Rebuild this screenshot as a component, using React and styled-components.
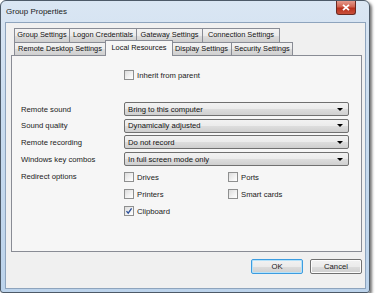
import React, { useState } from "react"
import styled, { createGlobalStyle } from "styled-components"

const GlobalStyle = createGlobalStyle`
  body {
    margin: 0;
    background: #ffffff;
    font-family: "Liberation Sans", Arial, sans-serif;
  }
`

const tabRows = [
    [
        { label: "Group Settings", width: 56 },
        { label: "Logon Credentials", width: 67 },
        { label: "Gateway Settings", width: 66 },
        { label: "Connection Settings", width: 77 }
    ],
    [
        { label: "Remote Desktop Settings", width: 92 },
        { label: "Local Resources", width: 66 },
        { label: "Display Settings", width: 60 },
        { label: "Security Settings", width: 61 }
    ]
]

const combos = [
    { label: "Remote sound", value: "Bring to this computer" },
    { label: "Sound quality", value: "Dynamically adjusted" },
    { label: "Remote recording", value: "Do not record" },
    { label: "Windows key combos", value: "In full screen mode only" }
]

function CheckBox({ checked, label, onToggle }) {
    return <CheckRow onClick={onToggle}>
        <Box>
            {checked &&
                <svg width="8" height="8" viewBox="0 0 8 8">
                    <path d="M1.5 4.2 L3.2 6.2 L6.6 1.4" fill="none" stroke="#2a4f9a" strokeWidth="1.3" />
                </svg>}
        </Box>
        <span>{label}</span>
    </CheckRow>
}

function App() {
    const [active, setActive] = useState("Local Resources")
    const [checks, setChecks] = useState({
        inherit: false,
        drives: false,
        ports: false,
        printers: false,
        smart: false,
        clipboard: true
    })

    // flip a checkbox
    function toggle(name) {
        setChecks(prev => ({ ...prev, [name]: !prev[name] }))
    }

    return <>
        <GlobalStyle />
        <Window>
            <TitleBar>
                <Title>Group Properties</Title>
                <CloseButton>
                    <svg width="8" height="7" viewBox="0 0 8 7">
                        <path d="M1 0.8 L7 6.2 M7 0.8 L1 6.2" stroke="#ffffff" strokeWidth="1.8" />
                    </svg>
                </CloseButton>
            </TitleBar>
            <Client>
                <Tabs>
                    {tabRows.map((row, i) =>
                        <TabRow key={i}>
                            {row.map(tab =>
                                <Tab
                                    key={tab.label}
                                    $width={tab.width}
                                    $active={tab.label === active}
                                    onClick={() => setActive(tab.label)}
                                >
                                    {tab.label}
                                </Tab>
                            )}
                        </TabRow>
                    )}
                </Tabs>
                <Panel>
                    <InheritRow>
                        <CheckBox checked={checks.inherit} label="Inherit from parent" onToggle={() => toggle("inherit")} />
                    </InheritRow>
                    <FormGrid>
                        {combos.map(c =>
                            <React.Fragment key={c.label}>
                                <Label>{c.label}</Label>
                                <Combo>
                                    <span>{c.value}</span>
                                    <Arrow />
                                </Combo>
                            </React.Fragment>
                        )}
                    </FormGrid>
                    <RedirectRow>
                        <Label>Redirect options</Label>
                        <OptionGrid>
                            <CheckBox checked={checks.drives} label="Drives" onToggle={() => toggle("drives")} />
                            <CheckBox checked={checks.ports} label="Ports" onToggle={() => toggle("ports")} />
                            <CheckBox checked={checks.printers} label="Printers" onToggle={() => toggle("printers")} />
                            <CheckBox checked={checks.smart} label="Smart cards" onToggle={() => toggle("smart")} />
                            <CheckBox checked={checks.clipboard} label="Clipboard" onToggle={() => toggle("clipboard")} />
                        </OptionGrid>
                    </RedirectRow>
                </Panel>
                <ButtonBar>
                    <Button $focused>OK</Button>
                    <Button>Cancel</Button>
                </ButtonBar>
            </Client>
        </Window>
    </>
}

const Window = styled.div`
    width: 370px;
    height: 293px;
    box-sizing: border-box;
    display: flex;
    flex-direction: column;
    border: 1px solid #4d5a68;
    border-radius: 6px 6px 3px 3px;
    background: linear-gradient(180deg, #dae6f3 0%, #c9dcef 40%, #bcd3eb 100%);
    box-shadow: 2px 2px 3px rgba(0, 0, 0, 0.55);
    color: #111;
    font-size: 7.7px;
`

const TitleBar = styled.div`
    height: 21px;
    display: flex;
    justify-content: space-between;
    align-items: flex-start;
    padding: 0 13px 0 5px;
    flex-shrink: 0;
`

const Title = styled.div`
    margin-top: 6px;
    font-size: 8px;
    color: #1a1a1a;
`

const CloseButton = styled.div`
    width: 20px;
    height: 14px;
    box-sizing: border-box;
    border: 1px solid #6b2a22;
    border-top: none;
    border-radius: 0 0 3px 3px;
    background: linear-gradient(180deg, #e59a8c 0%, #d0624f 45%, #b8301c 55%, #c9503a 100%);
    display: flex;
    align-items: center;
    justify-content: center;
`

const Client = styled.div`
    flex: 1;
    margin: 0 3px 3px 4px;
    background: #f0f0f0;
    border: 1px solid #8ea4bd;
    display: flex;
    flex-direction: column;
    padding: 5px 3px 0 5px;
`

const Tabs = styled.div`
    display: flex;
    flex-direction: column;
    padding-left: 3px;
`

const TabRow = styled.div`
    display: flex;
    height: 13px;
    &:first-child {
        height: 14px;
    }
`

const Tab = styled.div`
    width: ${p => p.$width}px;
    box-sizing: border-box;
    border: 1px solid #898c95;
    border-bottom: none;
    border-left-width: 0;
    &:first-child {
        border-left-width: 1px;
    }
    background: ${p => p.$active ? "#f6f6f6" : "linear-gradient(180deg, #f3f3f3 0%, #ebebeb 50%, #dddddd 51%, #cfcfcf 100%)"};
    font-size: 7.4px;
    text-align: center;
    line-height: 12px;
    white-space: nowrap;
    overflow: hidden;
    cursor: default;
    position: relative;
    ${p => p.$active && `
        border-left-width: 1px;
        border-right-width: 1px;
        margin: -2px -1px -1px -1px;
        height: calc(100% + 3px);
        line-height: 14px;
        z-index: 1;
        width: ${p.$width + 2}px;
    `}
`

const Panel = styled.div`
    height: 197px;
    box-sizing: border-box;
    background: #f6f6f6;
    border: 1px solid #898c95;
    padding: 13px 12px 0 9px;
    display: flex;
    flex-direction: column;
`

const InheritRow = styled.div`
    margin-left: 103px;
    height: 12px;
    display: flex;
    align-items: center;
`

const FormGrid = styled.div`
    margin-top: 21px;
    display: grid;
    grid-template-columns: 103px 1fr;
    grid-auto-rows: 14px;
    row-gap: 2.7px;
    align-items: center;
`

const Label = styled.div`
    color: #1a1a1a;
    white-space: nowrap;
`

const Combo = styled.div`
    height: 14px;
    box-sizing: border-box;
    border: 1px solid #707070;
    border-radius: 2px;
    background: linear-gradient(180deg, #f2f2f2 0%, #ebebeb 50%, #dddddd 51%, #cfcfcf 100%);
    display: flex;
    align-items: center;
    justify-content: space-between;
    padding: 0 5px 0 3px;
    white-space: nowrap;
`

const Arrow = styled.div`
    width: 0;
    height: 0;
    border-left: 3px solid transparent;
    border-right: 3px solid transparent;
    border-top: 3px solid #000;
`

const RedirectRow = styled.div`
    margin-top: 5px;
    display: grid;
    grid-template-columns: 103px 1fr;
    align-items: start;
    ${Label} {
        line-height: 12px;
    }
`

const OptionGrid = styled.div`
    display: grid;
    grid-template-columns: 104px 1fr;
    grid-auto-rows: 12px;
    row-gap: 5px;
`

const CheckRow = styled.label`
    display: flex;
    align-items: center;
    gap: 3px;
    height: 12px;
    color: #1a1a1a;
    cursor: default;
`

const Box = styled.div`
    width: 10px;
    height: 10px;
    box-sizing: border-box;
    border: 1px solid #8e8f8f;
    background: linear-gradient(135deg, #dcdcdc 0%, #f3f3f3 60%, #ffffff 100%);
    display: flex;
    align-items: center;
    justify-content: center;
`

const ButtonBar = styled.div`
    display: flex;
    justify-content: flex-end;
    gap: 7px;
    margin-top: 7px;
`

const Button = styled.button`
    width: 52px;
    height: 15px;
    padding: 0;
    box-sizing: border-box;
    font-family: inherit;
    font-size: 7.7px;
    color: #1a1a1a;
    border: 1px solid ${p => p.$focused ? "#3c9ce0" : "#707070"};
    border-radius: 2px;
    background: linear-gradient(180deg, #f2f2f2 0%, #ebebeb 50%, #dddddd 51%, #cfcfcf 100%);
    box-shadow: ${p => p.$focused ? "inset 0 0 0 1px #b5e2fa" : "inset 0 0 0 1px #fcfcfc"};
`

export default App
